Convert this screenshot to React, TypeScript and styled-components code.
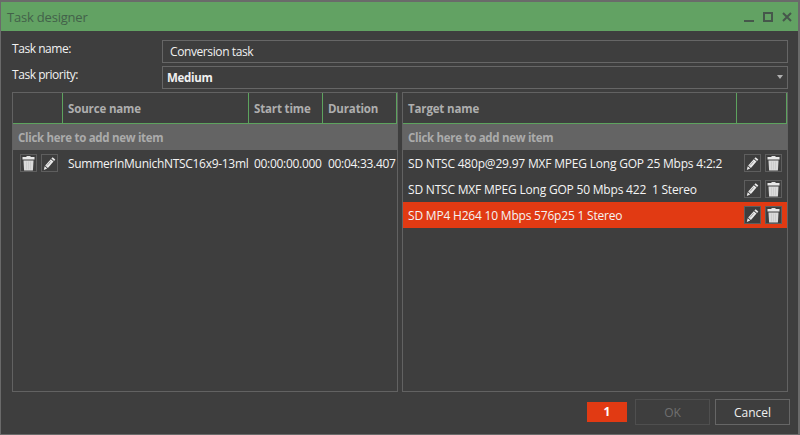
import React from 'react';
import styled, { createGlobalStyle } from 'styled-components';

const Global = createGlobalStyle`
  html, body { margin: 0; padding: 0; background: #3e3e3e; }
  body { font-family: "Open Sans", "Noto Sans", sans-serif; }
`;

const TrashIcon = () => (
  <svg width="13" height="15" viewBox="0 0 13 15">
    <rect x="4.5" y="0" width="4" height="1.5" fill="#e0e0e0" />
    <rect x="0.5" y="1" width="12" height="2.5" fill="#e8e8e8" />
    <path d="M1.5 4.5h10l-.6 10H2.1z" fill="#dadada" />
    <path d="M4.5 5.5v8M6.5 5.5v8M8.5 5.5v8" stroke="#c6c6c6" strokeWidth="0.7" />
  </svg>
);

const PencilIcon = () => (
  <svg width="13" height="15" viewBox="0 0 13 15">
    <path d="M9.6 1.2l2.7 2.4-1.2 1.4-2.7-2.4z" fill="#eaeaea" />
    <path d="M7.8 3.2l2.7 2.4-5.6 6.3-2.7-2.4z" fill="#eaeaea" />
    <path d="M7.6 5.4l-3.6 4.1" stroke="#8a8a8a" strokeWidth="0.8" />
    <path d="M1.7 10.2l2.5 2.2-3.4 1.5z" fill="#eaeaea" />
  </svg>
);

const Window = styled.div`
  width: 800px;
  height: 435px;
  box-sizing: border-box;
  border: 1px solid #6a6a6a;
  border-top-width: 2px;
  border-right-width: 2px;
  background: #3e3e3e;
  color: #f0f0f0;
  font-size: 12px;
  display: flex;
  flex-direction: column;
  overflow: hidden;
`;

const TitleBar = styled.div`
  height: 29px;
  flex: none;
  background: #62a263;
  display: flex;
  align-items: center;
  justify-content: space-between;
  padding: 0 6px 0 6px;
  color: #43614a;
  font-size: 13px;
  letter-spacing: -0.2px;
`;

const WindowControls = styled.div`
  display: flex;
  align-items: center;
  gap: 9px;
  color: #46574b;
`;

const Body = styled.div`
  flex: 1;
  display: flex;
  flex-direction: column;
  padding: 9px 10px 9px 11px;
`;

const FormRow = styled.div`
  display: grid;
  grid-template-columns: 150px 1fr;
  height: 22px;
  margin-bottom: 4px;
`;

const Label = styled.div`
  line-height: 18px;
  letter-spacing: -0.45px;
  color: #f2f2f2;
`;

const Field = styled.div<{ $bold?: boolean }>`
  position: relative;
  box-sizing: border-box;
  border: 1px solid #666;
  padding-left: ${(p) => (p.$bold ? 4 : 7)}px;
  line-height: 21px;
  font-size: ${(p) => (p.$bold ? 11.5 : 12)}px;
  letter-spacing: ${(p) => (p.$bold ? -0.3 : -0.4)}px;
  font-weight: ${(p) => (p.$bold ? 700 : 400)};
  color: #f0f0f0;
`;

const Caret = styled.span`
  position: absolute;
  right: 4px;
  top: 8px;
  width: 0;
  height: 0;
  border-left: 3px solid transparent;
  border-right: 3px solid transparent;
  border-top: 4px solid #b0b0b0;
`;

const Panels = styled.div`
  display: grid;
  grid-template-columns: 386px 386px;
  gap: 4px;
  height: 300px;
  flex: none;
`;

const Panel = styled.div`
  border: 1px solid #626262;
  display: flex;
  flex-direction: column;
  min-width: 0;
`;

const HeaderRow = styled.div`
  display: flex;
  height: 30px;
  border-bottom: 1px solid #5da35e;
  flex: none;
`;

const HeaderCell = styled.div<{ $w?: number }>`
  box-sizing: border-box;
  ${(p) => (p.$w ? `width: ${p.$w}px; flex: none;` : 'flex: 1;')}
  border-right: 1px solid #5da35e;
  padding-left: 5px;
  line-height: 32px;
  font-size: 11.5px;
  letter-spacing: -0.15px;
  font-weight: 700;
  color: #aeaeae;
  white-space: nowrap;
  overflow: hidden;
`;

const AddRow = styled.div`
  height: 26px;
  flex: none;
  background: #646464;
  color: #ababab;
  font-size: 11.5px;
  letter-spacing: -0.3px;
  font-weight: 700;
  line-height: 28px;
  padding-left: 5px;
`;

const Row = styled.div<{ $selected?: boolean }>`
  height: 26px;
  flex: none;
  display: flex;
  align-items: center;
  background: ${(p) => (p.$selected ? '#e13a13' : 'transparent')};
  color: #f4f4f4;
  white-space: pre;
  letter-spacing: -0.2px;
`;

const IconButton = styled.span`
  box-sizing: border-box;
  width: 17px;
  height: 18px;
  flex: none;
  display: flex;
  align-items: center;
  justify-content: center;
  border: 1px solid #5e5e5e;
  background: #3e3e3e;
  svg { display: block; }
`;

const IconGroup = styled.div<{ $left?: boolean }>`
  display: flex;
  gap: 4px;
  flex: none;
  margin-left: ${(p) => (p.$left ? '7px' : 'auto')};
  margin-right: ${(p) => (p.$left ? '0' : '5px')};
`;

const SourceCell = styled.span<{ $w: number; $pad: number }>`
  width: ${(p) => p.$w}px;
  padding-left: ${(p) => p.$pad}px;
  flex: none;
  box-sizing: border-box;
  letter-spacing: -0.3px;
`;

const TargetName = styled.span`
  padding-left: 5px;
  flex: 1;
  min-width: 0;
`;

const Footer = styled.div`
  display: flex;
  justify-content: flex-end;
  align-items: center;
  margin: 7px -2px 0 0;
  height: 26px;
  flex: none;
`;

const Badge = styled.div`
  width: 40px;
  height: 20px;
  background: #e13a13;
  color: #fff;
  font-weight: 700;
  text-align: center;
  line-height: 20px;
  margin-right: 8px;
`;

const Button = styled.div<{ $disabled?: boolean }>`
  box-sizing: border-box;
  width: 75px;
  height: 26px;
  margin-left: ${(p) => (p.$disabled ? 0 : 5)}px;
  border: 1px solid ${(p) => (p.$disabled ? '#4f4f4f' : '#666')};
  color: ${(p) => (p.$disabled ? '#707070' : '#f0f0f0')};
  text-align: center;
  line-height: 26px;
`;

const targets = [
  'SD NTSC 480p@29.97 MXF MPEG Long GOP 25 Mbps 4:2:2',
  'SD NTSC MXF MPEG Long GOP 50 Mbps 422  1 Stereo',
  'SD MP4 H264 10 Mbps 576p25 1 Stereo',
];

export default function App() {
  return (
    <>
      <Global />
      <Window>
        <TitleBar>
          <span>Task designer</span>
          <WindowControls>
            <svg width="10" height="10" viewBox="0 0 10 10">
              <rect x="0" y="8" width="10" height="2" fill="currentColor" />
            </svg>
            <svg width="10" height="10" viewBox="0 0 10 10">
              <rect x="1" y="1" width="8" height="8" fill="none" stroke="currentColor" strokeWidth="2" />
            </svg>
            <svg width="10" height="10" viewBox="0 0 10 10">
              <path d="M1 1l8 8M9 1l-8 8" stroke="currentColor" strokeWidth="2" />
            </svg>
          </WindowControls>
        </TitleBar>
        <Body>
          <FormRow>
            <Label>Task name:</Label>
            <Field>Conversion task</Field>
          </FormRow>
          <FormRow>
            <Label>Task priority:</Label>
            <Field $bold>
              Medium
              <Caret />
            </Field>
          </FormRow>
          <Panels>
            <Panel>
              <HeaderRow>
                <HeaderCell $w={50} />
                <HeaderCell $w={186}>Source name</HeaderCell>
                <HeaderCell $w={74}>Start time</HeaderCell>
                <HeaderCell>Duration</HeaderCell>
              </HeaderRow>
              <AddRow>Click here to add new item</AddRow>
              <Row>
                <IconGroup $left>
                  <IconButton><TrashIcon /></IconButton>
                  <IconButton><PencilIcon /></IconButton>
                </IconGroup>
                <SourceCell $w={196} $pad={10}>SummerInMunichNTSC16x9-13ml</SourceCell>
                <SourceCell $w={74} $pad={0}>00:00:00.000</SourceCell>
                <SourceCell $w={68} $pad={0}>00:04:33.407</SourceCell>
              </Row>
            </Panel>
            <Panel>
              <HeaderRow>
                <HeaderCell>Target name</HeaderCell>
                <HeaderCell $w={50} />
              </HeaderRow>
              <AddRow>Click here to add new item</AddRow>
              {targets.map((t, i) => (
                <Row key={t} $selected={i === 2}>
                  <TargetName>{t}</TargetName>
                  <IconGroup>
                    <IconButton><PencilIcon /></IconButton>
                    <IconButton><TrashIcon /></IconButton>
                  </IconGroup>
                </Row>
              ))}
            </Panel>
          </Panels>
          <Footer>
            <Badge>1</Badge>
            <Button $disabled>OK</Button>
            <Button>Cancel</Button>
          </Footer>
        </Body>
      </Window>
    </>
  );
}
